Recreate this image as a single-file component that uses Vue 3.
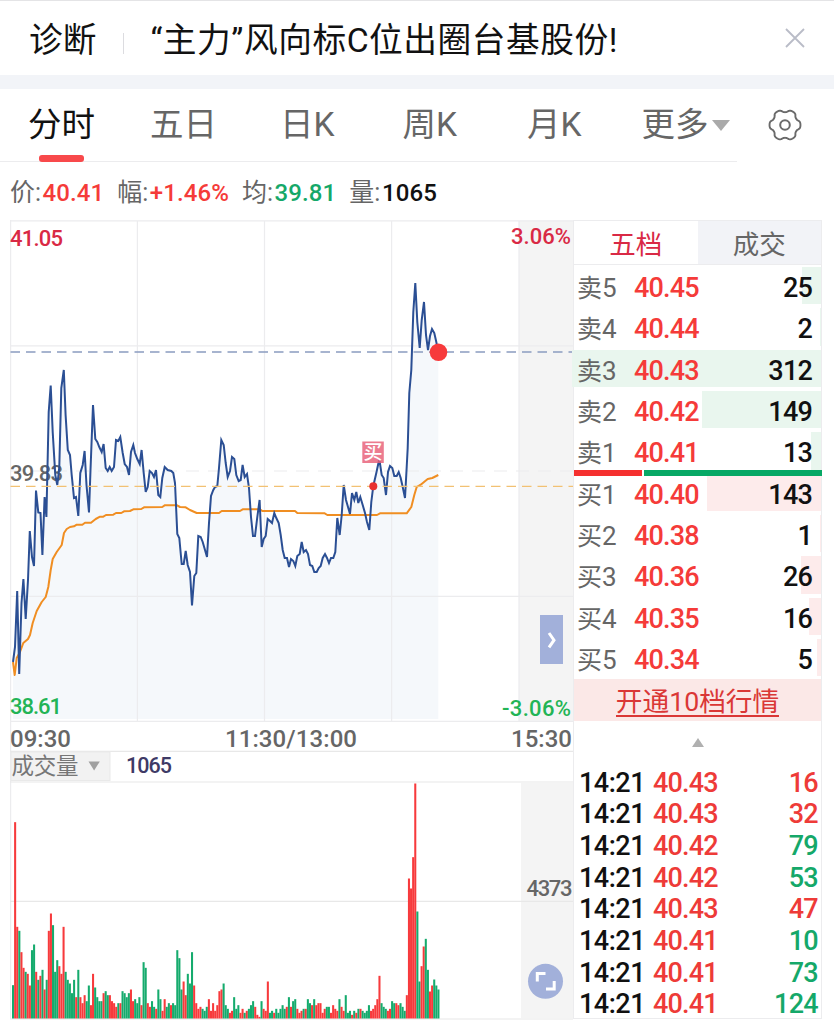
<script setup>
import { ref, computed } from 'vue'

const tabs = ['分时', '五日', '日K', '周K', '月K']
const activeTab = ref('分时')
const activeBook = ref('五档')

const sells = [
  { label: '卖', level: 5, price: '40.45', volume: 25, width: 19.5 },
  { label: '卖', level: 4, price: '40.44', volume: 2, width: 1.5 },
  { label: '卖', level: 3, price: '40.43', volume: 312, width: 249 },
  { label: '卖', level: 2, price: '40.42', volume: 149, width: 119 },
  { label: '卖', level: 1, price: '40.41', volume: 13, width: 10 }
]
const buys = [
  { label: '买', level: 1, price: '40.40', volume: 143, width: 114 },
  { label: '买', level: 2, price: '40.38', volume: 1, width: 1 },
  { label: '买', level: 3, price: '40.36', volume: 26, width: 20.5 },
  { label: '买', level: 4, price: '40.35', volume: 16, width: 12.5 },
  { label: '买', level: 5, price: '40.34', volume: 5, width: 4 }
]
const orders = [
  ...sells.map(o => ({ ...o, side: 'sell' })),
  ...buys.map(o => ({ ...o, side: 'buy' }))
]

const ticks = [
  { time: '14:21', price: '40.43', volume: 16, side: 'up' },
  { time: '14:21', price: '40.43', volume: 32, side: 'up' },
  { time: '14:21', price: '40.42', volume: 79, side: 'down' },
  { time: '14:21', price: '40.42', volume: 53, side: 'down' },
  { time: '14:21', price: '40.43', volume: 47, side: 'up' },
  { time: '14:21', price: '40.41', volume: 10, side: 'down' },
  { time: '14:21', price: '40.41', volume: 73, side: 'down' },
  { time: '14:21', price: '40.41', volume: 124, side: 'down' }
]

// 分时价格线
const priceLine = `13,662 15,647 17.2,591 19.2,674 21.5,603 23.4,579 25.7,619 28,580 29.8,531 32,557 34,566 36,490.5
38.3,512.5 40.5,513 42.4,555 44.6,497 46.4,517 48.7,412 50.7,385.5 52.7,432 55.3,475 57.3,485 59.3,467 61.3,388
63.8,370 65.6,415 67.8,450 70,455 71.7,475 74,498 76,497 78.3,516 80.3,473 82.7,465 84.6,451 86.5,485 89,512.5
90.5,470 93,405 95.3,439 97.3,442 99.3,447 101.7,452 103.6,444 105.7,468 107.7,471 109.7,467 111.7,471 114,467
116,440 118.3,441 120.3,437 122.7,453 124.7,464 127,467 129,475 131,452 133.3,445 135,453 137.3,459 139.7,464
141.6,450 143.7,473 145.7,492 147.7,487 149.7,471 152,473 154,477 156,470 158.3,495 160.3,497 162.3,478 164.7,467
167.7,470 171.3,471 173.3,473 175,483 177.3,534 179.3,538 181.7,564 183.7,564 185.7,551 187.7,565 190,572 192,605.5
194.3,576 196.3,573 198.3,536 200.7,537 202.7,542 205,550 207,557 209,523 211,496 213.3,490 215,487 217.3,486
219,468 221.3,440 223.7,445 225.7,463 227.7,477 230,471 232,457 234.3,459 236.3,475 238.7,481 240.7,480 242.6,465
244.7,477 247,474 249,488 251,517 253,536 255,536 257.3,517 259.6,500 261.7,547 263.7,539 265.7,536 267.7,519
270,521 272,523 274.3,513 276.3,518 278.7,523 280.7,535 282.7,550 284.7,558 287,558 289,567 291,559 293.3,561
295.3,566 297.3,556 299.7,554 301.7,542 303.7,552 306,550 308,554 310,565 312.3,566 314.3,572 316.7,572 318.7,568
320.7,566 322.7,558 325,554 327,558 329,563 331,558 333.3,558 335.3,552 337.3,518 339.7,535 341.7,515 343.7,485
346,500 348,507 350,514 352,493 354.3,500 356.3,492 358.3,503 360.3,497 362.7,505 365,513 367,522 369.3,530
371.3,502 373.3,486 376.3,473 379.3,459 381.7,475 383.7,478 386,495 388,472 390,466 392.3,468 394.3,476 396.7,476
398.7,472 400.7,478 402.7,487 405,498 406.7,467 407.7,448 409.3,393 411.3,370 413.3,312 415.3,283 417.3,322
419.7,348 421.7,320 424,302 426,335 428,350 430,336 432,329 434.3,333 436.3,342 438.3,352`

// 均价线
const averageLine = `13,662 14.7,675 16.7,658 20,652 23.3,643 28,639 30,635 32.7,623 36.7,611 41.7,602 45.7,597 48.3,587
50.7,570 52.7,559 56.7,552 61.7,545 64,533 66.7,529 70,527 74,526.3 76.7,524.7 82.3,524.7 85,522.7 91,522.7 95.7,519
100,516.7 103.3,516.7 106,515 113.3,514.7 116,513 121.3,513 124,511.3 130,511 133.3,509.3 141.3,509 144,507.3 162.3,507
165,505.2 176.7,505.2 180,507 185.7,507.3 190,510 196.7,513 219,513 221.7,511 240,511 242.7,509.3 260,509.3 262.3,511
295,511 297.3,513 324.3,513.2 327.3,515 377,515 380,513.3 406.7,513.3 411.3,507 414.3,495 416.7,487 420.7,484.7
427.7,479 432.3,478 438.3,475`

const areaShape = computed(() => `${priceLine} 438.3,719 13,719`)

// 每分钟成交量，正数为红柱，负数为绿柱
const volumes = [
  -100, 589, 275, -263, 199, 152, -140, 134, 99, -205, -222, 140, -116, 128, -146, 87, -116, 263, 315, -280,
  -140, -175, 157, 134, 275, -140, -116, -105, -76, -116, 64, -146, 64, 46, 70, -52, -99, 40, 134, -93,
  -64, -52, -52, 76, -82, -70, 70, 52, 46, 35, -46, 46, -82, -76, -64, -76, 87, 52, -58, -46,
  -64, 40, -169, -152, 46, 35, -52, -35, 29, -87, -58, 23, 58, -35, -46, 40, -46, -40, -205, -181,
  -87, 111, 70, -134, -105, -199, 99, 46, 29, 35, -29, -23, -35, 58, 23, 46, 23, 40, 82, 87,
  -105, -40, -29, 17, 23, -64, -29, -40, 17, 29, -17, 23, -29, -40, -52, 35, 11, 5, -52, 29,
  23, 111, -17, -23, 17, -29, -17, -29, -40, -29, 35, -64, 35, -52, -58, 29, 17, 23, -29, 29,
  -58, -46, 40, -58, 40, 46, 46, 17, 29, -35, -35, 17, 40, 29, 23, -58, 35, 23, -70, -17,
  -23, 11, -23, 17, -29, 29, -23, -17, -23, -40, 23, 29, 40, 58, 128, -46, -35, -29, 23, 29,
  -52, -46, 46, 40, -46, -35, -23, 70, 420, 390, 484, 705, -321, -111, 157, 216, -239, -146, 81, 99,
  -117, -99, -87
]
const volumeBars = computed(() =>
  volumes.map((v, i) => {
    const height = Math.abs(v) / 3
    return { x: 12 + i * 2.106, y: 1018.5 - height, height, up: v > 0 }
  })
)

// 设置图标的齿轮轮廓
const gearPath = computed(() => {
  const points = []
  for (let deg = 0; deg < 360; deg += 3) {
    const a = (deg * Math.PI) / 180
    const r = 14 + 1.5 * Math.tanh(1.6 * Math.cos(6 * a) + 0.5)
    points.push(`${(18 + r * Math.cos(a)).toFixed(2)},${(18 + r * Math.sin(a)).toFixed(2)}`)
  }
  return `M${points.join('L')}Z`
})
</script>

<template>
  <div class="page">
    <header class="notice">
      <span class="notice-tag">诊断</span>
      <i class="notice-divider"></i>
      <span class="notice-title">“主力”风向标C位出圈台基股份!</span>
      <svg class="close" viewBox="0 0 20 20" width="20" height="20">
        <path d="M1 1L19 19M19 1L1 19" fill="none" stroke="#b9bcc7" stroke-width="1.8" />
      </svg>
    </header>

    <nav class="tabs">
      <div class="tab-list">
        <button v-for="tab in tabs" :key="tab" class="tab" :class="{ active: tab === activeTab }" @click="activeTab = tab">
          {{ tab }}
        </button>
        <button class="tab more">更多<i class="caret"></i></button>
      </div>
      <svg class="gear" viewBox="0 0 36 36" width="36" height="36">
        <path :d="gearPath" fill="none" stroke="#6a6a6a" stroke-width="1.9" stroke-linejoin="round" />
        <circle cx="18" cy="18" r="4.8" fill="none" stroke="#6a6a6a" stroke-width="2" />
      </svg>
    </nav>

    <div class="quote">
      <span class="item">价:<b class="up">40.41</b></span>
      <span class="item">幅:<b class="up">+1.46%</b></span>
      <span class="item">均:<b class="down">39.81</b></span>
      <span class="item">量:<b>1065</b></span>
    </div>

    <main class="main">
      <svg class="chart" viewBox="10 220 563 804" width="563" height="804">
        <!-- 分时图 -->
        <rect x="519" y="221" width="54" height="500" fill="#f4f4f4" />
        <polygon :points="areaShape" fill="#f5f8fb" />
        <g stroke="#ececee" stroke-width="1.2" fill="none">
          <path d="M10 220.8H573M10.6 220V1019M137.4 221V721M264.5 221V721M391.6 221V721M519 221V721" />
          <path d="M10 345.8H573M10 596.3H573M10 721.3H573" />
          <path d="M10 471H573" stroke-dasharray="13 9" />
          <path d="M10 751.3H573M10 782H573M10 901.3H573M10 1019H573" stroke="#e8e8e8" />
        </g>
        <text x="10" y="480.5" class="label gray" textLength="53">39.83</text>
        <polyline :points="averageLine" fill="none" stroke="#f08e22" stroke-width="2" stroke-linejoin="round" />
        <polyline :points="priceLine" fill="none" stroke="#2b4f94" stroke-width="2" />
        <path d="M10.5 352H573" stroke="#8b9cc0" stroke-width="1.7" stroke-dasharray="9.5 6" />
        <path d="M10.5 486.3H573" stroke="#f2c173" stroke-width="1.3" stroke-dasharray="9.5 6" />
        <circle cx="438.5" cy="352.3" r="8.8" fill="#f73a3c" />
        <rect x="362.3" y="441.5" width="21.5" height="21.5" fill="#e86078" fill-opacity="0.83" />
        <text x="373" y="459" class="mark">买</text>
        <circle cx="373.3" cy="486.2" r="4" fill="#e8302f" />

        <text x="10" y="246" class="label red" textLength="53">41.05</text>
        <text x="511" y="244" class="label red" textLength="60">3.06%</text>
        <text x="10" y="714" class="label green" textLength="52">38.61</text>
        <text x="502" y="716" class="label green" textLength="69">-3.06%</text>
        <text x="10" y="746.5" class="axis" textLength="61">09:30</text>
        <text x="225" y="746.5" class="axis" textLength="132">11:30/13:00</text>
        <text x="511" y="746.5" class="axis" textLength="61">15:30</text>

        <rect x="540" y="615" width="23" height="49" fill="#a2b0da" />
        <path d="M549 633L554 640.2L549 647.4" fill="none" stroke="#fff" stroke-width="3" />

        <!-- 成交量 -->
        <rect x="11" y="752" width="99" height="28.5" fill="#f2f2f2" stroke="#e9e9e9" stroke-width="1" />
        <text x="11.5" y="774" class="select" textLength="67">成交量</text>
        <path d="M88.5 761.5H99.8L94.1 770.5Z" fill="#a0a0a0" />
        <text x="126" y="773" class="volume-now" textLength="46">1065</text>
        <rect x="521" y="782.5" width="52" height="236" fill="#f4f4f4" />
        <path d="M521 901.3H573" stroke="#e8e8e8" stroke-width="1.2" />
        <rect
          v-for="(bar, i) in volumeBars"
          :key="i"
          :x="bar.x"
          :y="bar.y"
          :height="bar.height"
          width="2.05"
          :fill="bar.up ? '#f73a3c' : '#15ab6d'"
        />
        <text x="526.5" y="896" class="label gray" textLength="46">4373</text>
        <circle cx="545.5" cy="981.3" r="17.5" fill="#a2b0da" />
        <path d="M545.5 973.5H537.3V981.5M546 989H554.2V981" fill="none" stroke="#fff" stroke-width="3" />
      </svg>

      <aside class="side">
        <div class="book-tabs">
          <button v-for="name in ['五档', '成交']" :key="name" :class="{ active: name === activeBook }" @click="activeBook = name">
            {{ name }}
          </button>
        </div>
        <div class="orders">
          <div v-for="order in orders" :key="order.label + order.level" class="order" :class="order.side">
            <i class="depth" :style="{ width: order.width + 'px' }"></i>
            <span class="order-label">{{ order.label }}<em>{{ order.level }}</em></span>
            <span class="order-price">{{ order.price }}</span>
            <span class="order-volume">{{ order.volume }}</span>
          </div>
          <div class="ratio"><i class="ratio-buy"></i><i class="ratio-sell"></i></div>
        </div>
        <div class="upgrade"><span>开通10档行情</span></div>
        <div class="collapse"><i></i></div>
        <div class="ticks">
          <div v-for="(tick, i) in ticks" :key="i" class="tick">
            <span class="tick-time">{{ tick.time }}</span>
            <span class="tick-price">{{ tick.price }}</span>
            <span class="tick-volume" :class="tick.side">{{ tick.volume }}</span>
          </div>
        </div>
      </aside>
    </main>
  </div>
</template>

<style>
body {
  margin: 0;
  background: #fff;
}
</style>

<style scoped>
.page {
  box-sizing: border-box;
  width: 834px;
  height: 1024px;
  overflow: hidden;
  background: #fff;
  color: #111;
  font-family: Roboto, 'Noto Sans CJK SC', sans-serif;
}

button {
  margin: 0;
  padding: 0;
  border: 0;
  background: none;
  font: inherit;
  color: inherit;
}

i,
em {
  font-style: normal;
}

.notice {
  box-sizing: border-box;
  display: flex;
  align-items: center;
  height: 89px;
  padding: 0 29px 0 29px;
  border-top: 1px solid #e4e4e6;
  border-bottom: 14px solid #f2f4f8;
  font-size: 33.7px;
  line-height: 74px;
  white-space: nowrap;
}

.notice-tag,
.notice-title {
  padding-top: 5px;
}

.notice-title {
  letter-spacing: 0.55px;
}

.notice-divider {
  width: 1px;
  height: 21px;
  margin: 10px 26px 0 27px;
  background: #dcdce0;
}

.close {
  margin-left: auto;
}

.tabs {
  display: flex;
  height: 73px;
}

.tab-list {
  box-sizing: border-box;
  display: flex;
  width: 737px;
  padding-left: 28px;
  border-bottom: 1px solid #ececee;
  font-size: 33.5px;
  line-height: 70px;
  color: #666;
}

.tab {
  position: relative;
  margin-right: 55px;
  white-space: nowrap;
}

.tab:nth-child(2) {
  margin-right: 63px;
}

.tab:nth-child(3) {
  margin-right: 68px;
}

.tab:nth-child(4) {
  margin-right: 70px;
}

.tab:nth-child(5) {
  margin-right: 60px;
}

.tab.more {
  display: flex;
  align-items: center;
  margin-right: 0;
}

.tab.active {
  color: #111;
}

.tab.active::after {
  content: '';
  position: absolute;
  left: 11px;
  bottom: -1px;
  width: 45px;
  height: 7px;
  border-radius: 3px;
  background: #f8494b;
}

.caret {
  margin-left: 3px;
  border: 9px solid transparent;
  border-top: 11px solid #aaa;
  border-bottom: 0;
}

.gear {
  margin: 18px 0 0 30px;
}

.quote {
  display: flex;
  height: 58px;
  padding-left: 10px;
  font-size: 25px;
  line-height: 62px;
  color: #666;
  white-space: nowrap;
}

.quote b {
  margin-left: 1.5px;
  font-weight: 500;
  font-size: 24px;
  letter-spacing: 0.1px;
  color: #111;
}

.item {
  margin-right: 13px;
}

.quote .up {
  color: #f53b39;
}

.quote .down {
  color: #15a869;
}

.main {
  display: flex;
  padding-left: 10px;
}

.chart {
  display: block;
  flex: none;
}

.chart text {
  font-family: Roboto, 'Noto Sans CJK SC', sans-serif;
}

.label {
  font-size: 22px;
  font-weight: 500;
}

.label.gray {
  fill: #666;
}

.label.red {
  fill: #d92945;
}

.label.green {
  fill: #22b455;
}

.axis {
  font-size: 24px;
  font-weight: 500;
  fill: #666;
}

.mark {
  font-size: 19px;
  font-weight: 500;
  fill: #fff;
  text-anchor: middle;
}

.select {
  font-size: 22.5px;
  fill: #777;
}

.volume-now {
  font-size: 21.5px;
  font-weight: 500;
  fill: #3e3a66;
}

.side {
  box-sizing: border-box;
  width: 249px;
  height: 799px;
  border: 1px solid #ececee;
  background: #fff;
}

.book-tabs {
  display: grid;
  grid-template-columns: 1fr 1fr;
  height: 43px;
  border-bottom: 1px solid #ececee;
  font-size: 26.5px;
  line-height: 48px;
  color: #666;
}

.book-tabs button {
  height: 43px;
  overflow: hidden;
  background: #f2f3f7;
}

.book-tabs .active {
  background: #fff;
  color: #d92945;
}

.orders {
  position: relative;
  padding-top: 2px;
  height: 412px;
}

.order {
  position: relative;
  display: flex;
  align-items: center;
  height: 37.33px;
  margin-bottom: 4px;
  font-size: 27px;
  line-height: 37px;
}

.depth {
  position: absolute;
  top: 0;
  right: 0;
  height: 100%;
  max-width: 249px;
}

.sell .depth {
  background: #e9f6ee;
}

.buy .depth {
  background: #fdebeb;
}

.order-label,
.order-price,
.order-volume {
  position: relative;
  top: 3px;
}

.order-label {
  width: 57px;
  padding-left: 3px;
  font-size: 25px;
  color: #666;
}

.order-label em {
  font-size: 26px;
}

.order-price {
  font-weight: 500;
  color: #f53b39;
  letter-spacing: -0.8px;
}

.order-volume {
  margin-left: auto;
  margin-right: 9px;
  font-weight: 500;
  letter-spacing: -0.8px;
}

.ratio {
  position: absolute;
  top: 205px;
  left: 0;
  right: -1px;
  display: flex;
  gap: 2px;
  height: 6px;
}

.ratio-buy {
  width: 68px;
  background: #f5302f;
}

.ratio-sell {
  flex: 1;
  background: #07a865;
}

.upgrade {
  height: 42px;
  background: #fbe8e7;
  color: #da3736;
  text-align: center;
  font-size: 26.7px;
  line-height: 44px;
}

.upgrade span {
  display: inline-block;
  height: 32px;
  margin-top: 4px;
  border-bottom: 2px solid #da3736;
  line-height: 39px;
}

.collapse {
  display: flex;
  justify-content: center;
  height: 45.5px;
}

.collapse i {
  height: 0;
  margin-top: 16.5px;
  border: 6.5px solid transparent;
  border-top: 0;
  border-bottom: 9px solid #b0b0b0;
}

.tick {
  display: flex;
  height: 31.7px;
  padding: 0 3px 0 5px;
  font-size: 27px;
  font-weight: 500;
  line-height: 32px;
}

.tick-time {
  width: 74px;
  letter-spacing: -0.5px;
}

.tick-price {
  color: #ee3b38;
  letter-spacing: -0.8px;
}

.tick-volume {
  margin-left: auto;
  letter-spacing: -0.7px;
}

.tick .up {
  color: #ee3b38;
}

.tick .down {
  color: #15a869;
}
</style>
